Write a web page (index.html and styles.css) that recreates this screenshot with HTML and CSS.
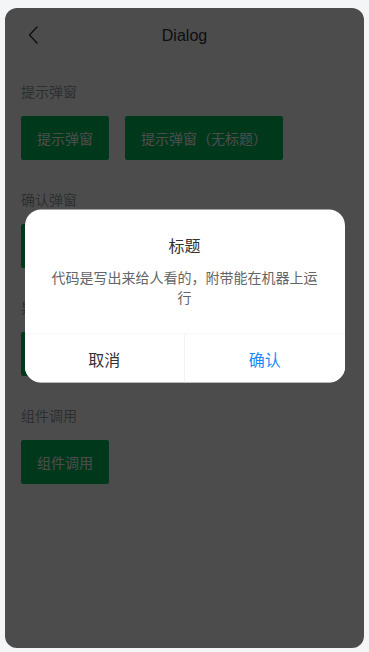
FILE: index.html
```html
<!DOCTYPE html>
<html lang="zh-CN">
<head>
<meta charset="utf-8">
<title>Dialog</title>
<link rel="stylesheet" href="styles.css">
</head>
<body>
<div class="phone">
  <div class="nav">
    <span class="nav-back">
      <svg width="12" height="18" viewBox="0 0 12 18"><path d="M10 1 L2.5 9 L10 17" fill="none" stroke="#3c3c3e" stroke-width="1.5" stroke-linecap="round" stroke-linejoin="round"/></svg>
    </span>
    <span class="nav-title">Dialog</span>
  </div>
  <div class="content">
    <section class="block">
      <h2 class="block-title">提示弹窗</h2>
      <div class="btn-row">
        <button class="btn">提示弹窗</button>
        <button class="btn">提示弹窗（无标题）</button>
      </div>
    </section>
    <section class="block">
      <h2 class="block-title">确认弹窗</h2>
      <div class="btn-row">
        <button class="btn">确认弹窗</button>
      </div>
    </section>
    <section class="block">
      <h2 class="block-title">异步关闭</h2>
      <div class="btn-row">
        <button class="btn">异步关闭</button>
      </div>
    </section>
    <section class="block">
      <h2 class="block-title">组件调用</h2>
      <div class="btn-row">
        <button class="btn">组件调用</button>
      </div>
    </section>
  </div>
  <div class="overlay"></div>
  <div class="dialog">
    <div class="dialog-header">标题</div>
    <div class="dialog-message">代码是写出来给人看的，附带能在机器上运行</div>
    <div class="dialog-footer">
      <button class="dialog-btn cancel">取消</button>
      <button class="dialog-btn confirm">确认</button>
    </div>
  </div>
</div>
</body>
</html>
```
FILE: styles.css
```css
* { box-sizing: border-box; }
html, body { margin: 0; padding: 0; }
body {
  background: #f4f5f7;
  font-family: "Liberation Sans", "Noto Sans CJK SC", sans-serif;
  color: #323233;
  padding: 8px 5px 4px 5px;
}
.phone {
  position: relative;
  height: 640px;
  background: #fff;
  border-radius: 12px;
  overflow: hidden;
}
.nav {
  position: relative;
  height: 54px;
  display: flex;
  align-items: center;
  justify-content: center;
  background: #fff;
}
.nav-back {
  position: absolute;
  left: 22px;
  top: 18px;
  display: flex;
}
.nav-title {
  font-size: 16px;
  color: #323233;
  padding-top: 1px;
}
.content {
  padding-top: 22px;
}
.block {
  padding: 0 16px 32px;
}
.block-title {
  margin: 0 0 16px;
  font-size: 14px;
  line-height: 16px;
  font-weight: normal;
  color: rgba(69, 90, 100, 0.6);
}
.btn-row {
  display: flex;
  gap: 16px;
}
.btn {
  height: 44px;
  padding: 0 15px;
  border: 1px solid #02bb5c;
  background: #02bb5c;
  color: #fff;
  font-family: inherit;
  font-size: 14px;
  border-radius: 2px;
}
.overlay {
  position: absolute;
  inset: 0;
  background: rgba(0, 0, 0, 0.7);
}
.dialog {
  position: absolute;
  top: 45%;
  left: 50%;
  width: 320px;
  transform: translate(-50%, -50%);
  background: #fff;
  border-radius: 16px;
  overflow: hidden;
}
.dialog-header {
  padding-top: 25px;
  font-size: 16px;
  line-height: 24px;
  text-align: center;
  color: #323233;
}
.dialog-message {
  padding: 9px 24px 26px;
  font-size: 14px;
  line-height: 20px;
  text-align: center;
  color: #646566;
}
.dialog-footer {
  display: flex;
  border-top: 1px solid #f2f3f5;
}
.dialog-btn {
  flex: 1;
  height: 48px;
  border: 0;
  background: #fff;
  font-family: inherit;
  font-size: 16px;
  color: #323233;
}
.dialog-btn.confirm {
  color: #1989fa;
  border-left: 1px solid #f2f3f5;
}
```
